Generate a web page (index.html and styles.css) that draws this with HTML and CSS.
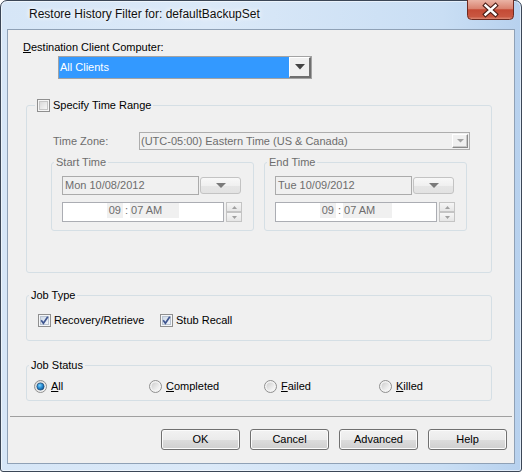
FILE: index.html
```html
<!DOCTYPE html>
<html>
<head>
<meta charset="utf-8">
<title>Restore History Filter</title>
<link rel="stylesheet" href="styles.css">
</head>
<body>
<div class="window">
  <div class="titlebar">
    <span class="title">Restore History Filter for: defaultBackupSet</span>
    <div class="close">
      <svg width="47" height="20" viewBox="0 0 47 20">
        <defs>
          <linearGradient id="closeg" x1="0" y1="0" x2="0" y2="1">
            <stop offset="0" stop-color="#eab3a5"/>
            <stop offset="0.45" stop-color="#d9826f"/>
            <stop offset="0.5" stop-color="#c44a35"/>
            <stop offset="0.85" stop-color="#c95741"/>
            <stop offset="1" stop-color="#e0937f"/>
          </linearGradient>
        </defs>
        <path d="M0.5 0 L0.5 15.5 Q0.5 19.5 4.5 19.5 L42.5 19.5 Q46.5 19.5 46.5 15.5 L46.5 0" fill="url(#closeg)" stroke="#6e2a20"/>
        <path d="M18.5 5.5 L28.5 14.5 M28.5 5.5 L18.5 14.5" stroke="#4a1e17" stroke-width="4.6" stroke-linecap="square"/>
        <path d="M18.5 5.5 L28.5 14.5 M28.5 5.5 L18.5 14.5" stroke="#ffffff" stroke-width="2.4" stroke-linecap="square"/>
      </svg>
    </div>
  </div>

  <div class="client">
    <div class="dest-label"><u>D</u>estination Client Computer:</div>
    <div class="combo-active">
      <span class="combo-text">All Clients</span>
      <span class="combo-btn">
        <svg width="10" height="6" viewBox="0 0 10 6"><polygon points="0,0 10,0 5,5.5" fill="#444"/></svg>
      </span>
    </div>

    <fieldset class="group group-range">
      <legend class="legend-check">
        <span class="legend-inner">
          <svg class="cb" width="13" height="13" viewBox="0 0 13 13">
            <defs>
              <linearGradient id="cbu" x1="0" y1="0" x2="1" y2="1">
                <stop offset="0" stop-color="#d8d8d8"/>
                <stop offset="1" stop-color="#f8f8f8"/>
              </linearGradient>
            </defs>
            <rect x="0.5" y="0.5" width="12" height="12" fill="#f6f6f6" stroke="#8f8f8f"/>
            <rect x="2.5" y="2.5" width="8" height="8" fill="url(#cbu)" stroke="#c6c6c6"/>
          </svg>
          <span>Specify Time Range</span>
        </span>
      </legend>
      <div class="range-body">
        <div class="tz-row">
          <span class="tz-label">Time Zone:</span>
          <div class="combo-disabled">
            <span class="tz-text">(UTC-05:00) Eastern Time (US &amp; Canada)</span>
            <span class="mini-btn">
              <svg width="7" height="4" viewBox="0 0 7 4"><polygon points="0,0 7,0 3.5,3.5" fill="#a3a3a3"/></svg>
            </span>
          </div>
        </div>
        <div class="time-groups">
          <fieldset class="subgroup">
            <legend class="sublegend">Start Time</legend>
            <div class="date-row">
              <div class="date-field">Mon 10/08/2012</div>
              <div class="date-btn"><svg width="10" height="5" viewBox="0 0 10 5"><polygon points="0,0 10,0 5,5" fill="#7a7a7a"/></svg></div>
            </div>
            <div class="time-row">
              <div class="time-field"><span class="seg seg-h">09</span><span class="colon">:</span><span class="seg seg-m">07 AM</span></div>
              <div class="spin">
                <span class="spin-half"><svg width="5" height="3" viewBox="0 0 5 3"><polygon points="2.5,0 5,3 0,3" fill="#a0a0a0"/></svg></span>
                <span class="spin-half"><svg width="5" height="3" viewBox="0 0 5 3"><polygon points="0,0 5,0 2.5,3" fill="#a0a0a0"/></svg></span>
              </div>
            </div>
          </fieldset>
          <fieldset class="subgroup">
            <legend class="sublegend">End Time</legend>
            <div class="date-row">
              <div class="date-field">Tue 10/09/2012</div>
              <div class="date-btn"><svg width="10" height="5" viewBox="0 0 10 5"><polygon points="0,0 10,0 5,5" fill="#7a7a7a"/></svg></div>
            </div>
            <div class="time-row">
              <div class="time-field"><span class="seg seg-h">09</span><span class="colon">:</span><span class="seg seg-m">07 AM</span></div>
              <div class="spin">
                <span class="spin-half"><svg width="5" height="3" viewBox="0 0 5 3"><polygon points="2.5,0 5,3 0,3" fill="#a0a0a0"/></svg></span>
                <span class="spin-half"><svg width="5" height="3" viewBox="0 0 5 3"><polygon points="0,0 5,0 2.5,3" fill="#a0a0a0"/></svg></span>
              </div>
            </div>
          </fieldset>
        </div>
      </div>
    </fieldset>

    <fieldset class="group group-type">
      <legend class="plain-legend">Job Type</legend>
      <div class="checks">
        <label class="check-item check-first">
          <svg class="cb" width="13" height="13" viewBox="0 0 13 13">
            <defs>
              <linearGradient id="cbc1" x1="0" y1="0" x2="1" y2="1">
                <stop offset="0" stop-color="#cdd8e6"/>
                <stop offset="1" stop-color="#f4f7fb"/>
              </linearGradient>
            </defs>
            <rect x="0.5" y="0.5" width="12" height="12" fill="#f4f6f9" stroke="#8f8f8f"/>
            <rect x="2.5" y="2.5" width="8" height="8" fill="url(#cbc1)" stroke="#b9c3d0"/>
            <path d="M3.2 6.3 L5.4 9.2 L9.8 2.8" fill="none" stroke="#3f5690" stroke-width="1.7"/>
          </svg>
          <span>Recovery/Retrieve</span>
        </label>
        <label class="check-item">
          <svg class="cb" width="13" height="13" viewBox="0 0 13 13">
            <defs>
              <linearGradient id="cbc2" x1="0" y1="0" x2="1" y2="1">
                <stop offset="0" stop-color="#cdd8e6"/>
                <stop offset="1" stop-color="#f4f7fb"/>
              </linearGradient>
            </defs>
            <rect x="0.5" y="0.5" width="12" height="12" fill="#f4f6f9" stroke="#8f8f8f"/>
            <rect x="2.5" y="2.5" width="8" height="8" fill="url(#cbc2)" stroke="#b9c3d0"/>
            <path d="M3.2 6.3 L5.4 9.2 L9.8 2.8" fill="none" stroke="#3f5690" stroke-width="1.7"/>
          </svg>
          <span>Stub Recall</span>
        </label>
      </div>
    </fieldset>

    <fieldset class="group group-status">
      <legend class="plain-legend">Job Status</legend>
      <div class="radios">
        <label class="radio-item">
          <svg width="13" height="13" viewBox="0 0 13 13">
            <defs>
              <linearGradient id="rb0" x1="0" y1="0" x2="1" y2="1">
                <stop offset="0" stop-color="#d6d6d6"/>
                <stop offset="1" stop-color="#fbfbfb"/>
              </linearGradient>
              <radialGradient id="rdot" cx="0.4" cy="0.35" r="0.7">
                <stop offset="0" stop-color="#7fd3fb"/>
                <stop offset="0.5" stop-color="#2a8fd6"/>
                <stop offset="1" stop-color="#0d4f8c"/>
              </radialGradient>
            </defs>
            <circle cx="6.5" cy="6.5" r="6" fill="url(#rb0)" stroke="#8f8f8f"/>
            <circle cx="6.5" cy="6.5" r="3.6" fill="url(#rdot)" stroke="#24527c" stroke-width="0.8"/>
          </svg>
          <span><u>A</u>ll</span>
        </label>
        <label class="radio-item">
          <svg width="13" height="13" viewBox="0 0 13 13">
            <defs>
              <linearGradient id="rb1" x1="0" y1="0" x2="1" y2="1">
                <stop offset="0" stop-color="#cfcfcf"/>
                <stop offset="1" stop-color="#fbfbfb"/>
              </linearGradient>
            </defs>
            <circle cx="6.5" cy="6.5" r="6" fill="#f3f3f3" stroke="#8f8f8f"/>
            <circle cx="6.5" cy="6.5" r="4" fill="url(#rb1)"/>
          </svg>
          <span><u>C</u>ompleted</span>
        </label>
        <label class="radio-item">
          <svg width="13" height="13" viewBox="0 0 13 13">
            <defs>
              <linearGradient id="rb2" x1="0" y1="0" x2="1" y2="1">
                <stop offset="0" stop-color="#cfcfcf"/>
                <stop offset="1" stop-color="#fbfbfb"/>
              </linearGradient>
            </defs>
            <circle cx="6.5" cy="6.5" r="6" fill="#f3f3f3" stroke="#8f8f8f"/>
            <circle cx="6.5" cy="6.5" r="4" fill="url(#rb2)"/>
          </svg>
          <span><u>F</u>ailed</span>
        </label>
        <label class="radio-item">
          <svg width="13" height="13" viewBox="0 0 13 13">
            <defs>
              <linearGradient id="rb3" x1="0" y1="0" x2="1" y2="1">
                <stop offset="0" stop-color="#cfcfcf"/>
                <stop offset="1" stop-color="#fbfbfb"/>
              </linearGradient>
            </defs>
            <circle cx="6.5" cy="6.5" r="6" fill="#f3f3f3" stroke="#8f8f8f"/>
            <circle cx="6.5" cy="6.5" r="4" fill="url(#rb3)"/>
          </svg>
          <span><u>K</u>illed</span>
        </label>
      </div>
    </fieldset>

    <div class="separator"></div>

    <div class="buttons">
      <div class="btn">OK</div>
      <div class="btn">Cancel</div>
      <div class="btn">Advanced</div>
      <div class="btn">Help</div>
    </div>
  </div>
</div>
</body>
</html>
```

FILE: styles.css
```css
* { box-sizing: border-box; }
html, body { margin: 0; padding: 0; }
body {
  width: 522px;
  height: 472px;
  overflow: hidden;
  font-family: "Liberation Sans", Arial, sans-serif;
  font-size: 11px;
  color: #000;
  background: #ffffff;
}
svg { display: block; flex: none; }

.window {
  width: 522px;
  height: 472px;
  border: 1px solid #3b4656;
  border-radius: 7px 7px 3px 3px;
  background: linear-gradient(90deg, #d6e6f7 0%, #dbe9f8 40%, #c9def4 85%, #b7d1ee 100%);
  display: flex;
  flex-direction: column;
  box-shadow: inset 0 0 0 1px rgba(255,255,255,0.55);
}

.titlebar {
  height: 28px;
  display: flex;
  align-items: flex-start;
  flex: none;
}
.title {
  flex: 1;
  padding: 6px 0 0 28px;
  font-size: 12px;
  line-height: 15px;
  color: #101010;
  text-shadow: 0 0 6px #fff, 0 0 4px #fff;
}
.close {
  width: 47px;
  height: 20px;
  margin: -1px 7px 0 0;
}

.client {
  height: 435px;
  margin: 0 6px;
  border: 1px solid #8fa1b6;
  background: #f0f0f0;
  padding: 11px 0 0 0;
  display: flex;
  flex-direction: column;
  align-items: flex-start;
  flex: none;
}

.dest-label {
  margin-left: 15px;
  line-height: 13px;
}

.combo-active {
  margin: 2px 0 0 50px;
  width: 254px;
  height: 23px;
  border: 1px solid #a3a3a3;
  background: #3399ff;
  display: flex;
  align-items: stretch;
}
.combo-text {
  flex: 1;
  color: #fff;
  padding-left: 1px;
  line-height: 21px;
}
.combo-btn {
  width: 22px;
  background: #f0f0f0;
  border-top: 1px solid #fff;
  border-left: 1px solid #fff;
  border-right: 2px solid #6f6f6f;
  border-bottom: 2px solid #6f6f6f;
  display: flex;
  align-items: center;
  justify-content: center;
}

.group {
  margin: 0 0 0 18px;
  width: 466px;
  min-width: 0;
  border: 1px solid #d5dfe5;
  border-radius: 3px;
  padding: 0;
}
.group-range {
  margin-top: 20px;
  padding-bottom: 41px;
}
.legend-check {
  margin-left: 8px;
  padding: 0 2px;
  height: 13px;
}
.legend-inner {
  display: flex;
  align-items: center;
  gap: 3px;
  height: 13px;
  line-height: 13px;
}
.range-body {
  padding: 20px 0 0 24px;
}
.tz-row {
  display: flex;
  align-items: center;
  height: 18px;
}
.tz-label {
  width: 88px;
  padding-left: 2px;
  color: #6d6d6d;
}
.combo-disabled {
  width: 331px;
  height: 18px;
  border: 1px solid #adadad;
  background: #f0f0f0;
  display: flex;
  align-items: center;
  justify-content: space-between;
  padding-left: 1px;
  color: #6d6d6d;
}
.mini-btn {
  width: 16px;
  height: 14px;
  margin-right: 1px;
  background: #f0f0f0;
  border-top: 1px solid #fff;
  border-left: 1px solid #fff;
  border-right: 1px solid #8a8a8a;
  border-bottom: 1px solid #8a8a8a;
  box-shadow: inset -1px -1px 0 #c8c8c8;
  display: flex;
  align-items: center;
  justify-content: center;
}

.time-groups {
  display: flex;
  gap: 10px;
  margin-top: 6px;
}
.subgroup {
  width: 203px;
  min-width: 0;
  margin: 0;
  border: 1px solid #d5dfe5;
  border-radius: 3px;
  padding: 7px 0 8px 0;
}
.sublegend, .plain-legend {
  margin-left: 2px;
  padding: 0 2px;
  line-height: 13px;
}
.sublegend { color: #6d6d6d; }

.date-row {
  display: flex;
  align-items: center;
  height: 19px;
  margin-left: 10px;
}
.date-field {
  width: 137px;
  height: 19px;
  border: 1px solid #ababab;
  background: #f0f0f0;
  padding-left: 2px;
  line-height: 17px;
  color: #6d6d6d;
}
.date-btn {
  width: 41px;
  height: 17px;
  margin-left: 1px;
  border: 1px solid #c3c3c3;
  border-radius: 3px;
  background: linear-gradient(180deg, #f8f8f8 0%, #f0f0f0 50%, #e6e6e6 51%, #e2e2e2 100%);
  display: flex;
  align-items: center;
  justify-content: center;
}

.time-row {
  display: flex;
  margin: 7px 0 0 10px;
  height: 20px;
}
.time-field {
  width: 162px;
  height: 20px;
  border: 1px solid #abadb3;
  background: #fff;
  display: flex;
  justify-content: center;
  align-items: flex-start;
  line-height: 15px;
  color: #6d6d6d;
}
.seg { background: #f0f0f0; }
.seg-h { padding: 0 2px; }
.seg-m { padding: 0 17px 0 1px; }
.colon { padding: 0 2px; }

.spin {
  width: 16px;
  height: 20px;
  margin-left: 2px;
  display: flex;
  flex-direction: column;
}
.spin-half {
  height: 10px;
  border: 1px solid #c4c4c4;
  background: linear-gradient(180deg, #f6f6f6, #e6e6e6);
  display: flex;
  align-items: center;
  justify-content: center;
}

.group-type {
  margin-top: 16px;
  padding: 12px 0 13px 0;
}
.checks {
  display: flex;
  height: 13px;
  margin-left: 11px;
}
.check-item {
  display: flex;
  align-items: center;
  gap: 3px;
  line-height: 13px;
}
.check-first { width: 122px; }

.group-status {
  margin-top: 18px;
  padding: 8px 0 7px 0;
}
.radios {
  display: grid;
  grid-template-columns: 115px 115px 115px 115px;
  height: 13px;
  margin-left: 7px;
}
.radio-item {
  display: flex;
  align-items: center;
  gap: 4px;
  line-height: 13px;
}

.separator {
  align-self: stretch;
  margin: 15px 2px 0 2px;
  height: 1px;
  background: #a0a0a0;
}

.buttons {
  align-self: stretch;
  margin-top: 12px;
  display: flex;
  justify-content: flex-end;
  gap: 10px;
  padding-right: 7px;
}
.btn {
  width: 79px;
  height: 21px;
  border: 1px solid #707070;
  border-radius: 3px;
  background: linear-gradient(180deg, #f2f2f2 0%, #ebebeb 50%, #dddddd 51%, #cfcfcf 100%);
  box-shadow: inset 0 0 0 1px #fbfbfb;
  text-align: center;
  line-height: 19px;
}
```
